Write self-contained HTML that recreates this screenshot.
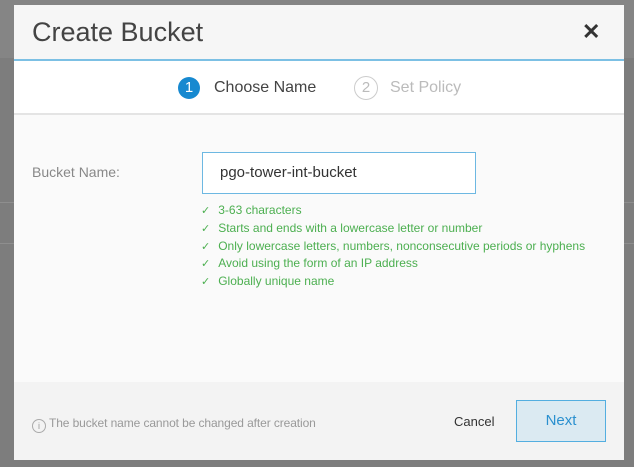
<!DOCTYPE html>
<html><head><style>
body{margin:0;width:634px;height:467px;background:#7d7d7d;font-family:"Liberation Sans",sans-serif;position:relative;overflow:hidden}
.bg1{position:absolute;left:0;top:0;width:634px;height:58px;background:#858585}
.bgl{position:absolute;left:0;height:1px;width:634px;background:#8e8e8e}
.m{position:absolute;left:14px;top:5px;width:610px;height:455px;background:#fafafa}
.hd{position:absolute;left:0;top:0;width:610px;height:54px;background:#f6f6f6;border-bottom:2px solid #7cc0e4}
.ttl{position:absolute;left:18px;top:12px;font-size:27px;color:#444}
.x{position:absolute;left:568px;top:14px;font-size:22px;font-weight:bold;color:#333}
.st{position:absolute;left:0;top:56px;width:610px;height:52px;background:#fff;border-bottom:2px solid #e4e4e4}
.c{position:absolute;width:22px;height:22px;border-radius:50%;text-align:center;line-height:22px;font-size:15px}
.lab{position:absolute;font-size:16px;top:18px}
.lbl{position:absolute;left:18px;top:159px;font-size:14px;color:#888}
.in{position:absolute;left:188px;top:147px;width:272px;height:40px;border:1px solid #6db8e2;background:#fff}
.in span{position:absolute;left:17px;top:11px;font-size:15px;color:#333}
ul{position:absolute;left:187px;top:197px;margin:0;padding:0;list-style:none;font-size:12px;color:#4caf50;line-height:16.8px}
ul li:before{content:"\2713";margin-right:8px;font-size:11px}
.ft{position:absolute;left:0;top:377px;width:610px;height:78px;background:#f3f3f3}
.note{position:absolute;left:18px;top:34px;font-size:12px;color:#999;letter-spacing:-0.1px}
.note b{display:inline-block;width:12px;height:12px;border:1px solid #aaa;border-radius:50%;font-size:9px;text-align:center;line-height:12px;font-weight:normal;margin-right:3px;vertical-align:-2px}
.cn{position:absolute;left:440px;top:32px;font-size:13px;color:#333}
.nx{position:absolute;left:502px;top:18px;width:88px;height:40px;border:1px solid #53aee0;background:#dbeaf2;color:#2a90cf;font-size:15px;text-align:center;line-height:40px}
</style></head><body>
<div class="bg1"></div><div class="bgl" style="top:202px"></div><div class="bgl" style="top:243px"></div>
<div class="m">
<div class="hd"><div class="ttl">Create Bucket</div><div class="x">✕</div></div>
<div class="st">
<div class="c" style="left:164px;top:16px;background:#1789d0;color:#fff">1</div>
<div class="lab" style="left:200px;color:#444">Choose Name</div>
<div class="c" style="left:340px;top:15px;border:1px solid #ccc;color:#bbb">2</div>
<div class="lab" style="left:376px;color:#bbb">Set Policy</div>
</div>
<div class="lbl">Bucket Name:</div>
<div class="in"><span>pgo-tower-int-bucket</span></div>
<ul><li>3-63 characters</li><li>Starts and ends with a lowercase letter or number</li><li>Only lowercase letters, numbers, nonconsecutive periods or hyphens</li><li>Avoid using the form of an IP address</li><li>Globally unique name</li></ul>
<div class="ft"><div class="note"><b>i</b>The bucket name cannot be changed after creation</div><div class="cn">Cancel</div><div class="nx">Next</div></div>
</div>
</body></html>
